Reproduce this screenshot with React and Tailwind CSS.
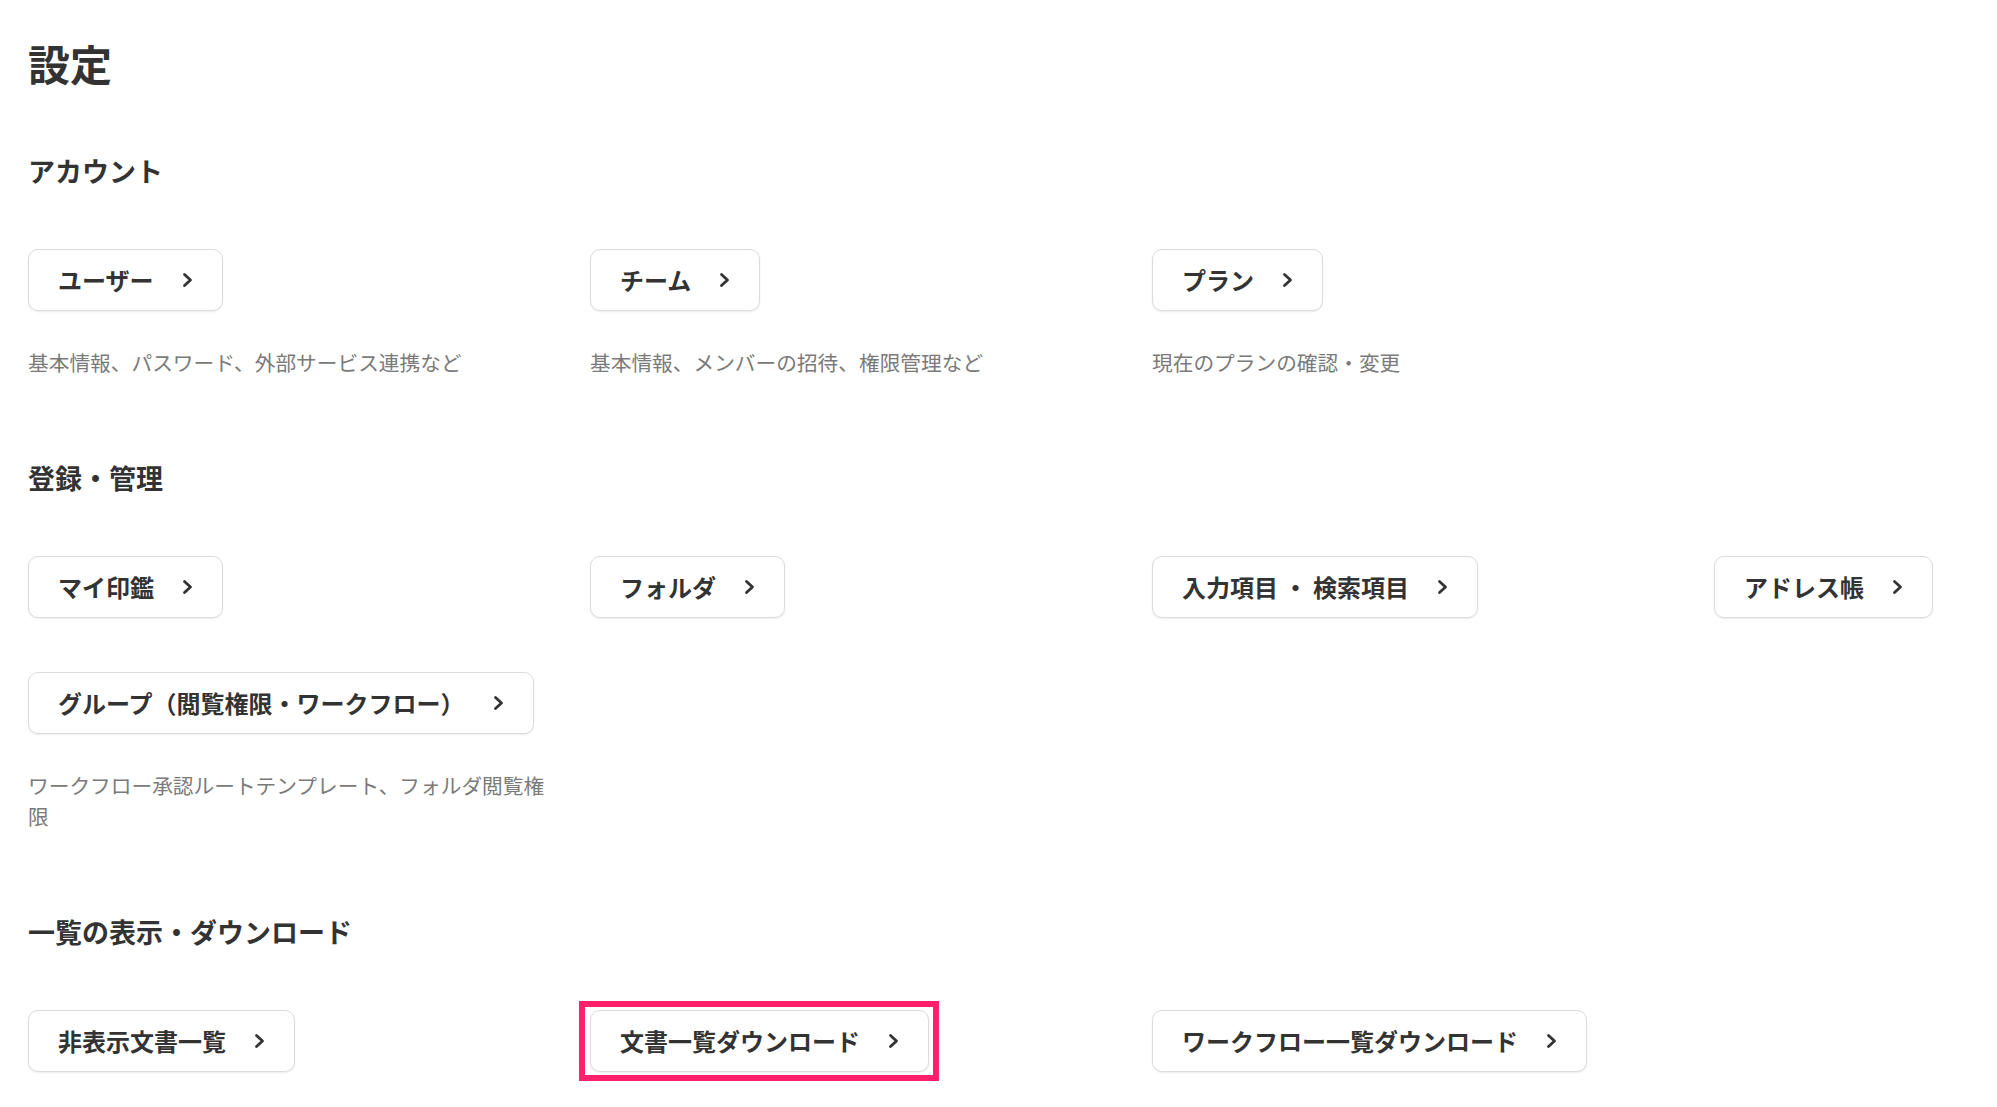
import React from "react";

const sections = [
  {
    title: "アカウント",
    items: [
      { label: "ユーザー", desc: "基本情報、パスワード、外部サービス連携など" },
      { label: "チーム", desc: "基本情報、メンバーの招待、権限管理など" },
      { label: "プラン", desc: "現在のプランの確認・変更" },
    ],
  },
  {
    title: "登録・管理",
    items: [
      { label: "マイ印鑑" },
      { label: "フォルダ" },
      { label: "入力項目 ・ 検索項目" },
      { label: "アドレス帳" },
      {
        label: "グループ（閲覧権限・ワークフロー）",
        desc: "ワークフロー承認ルートテンプレート、フォルダ閲覧権限",
      },
    ],
  },
  {
    title: "一覧の表示・ダウンロード",
    items: [
      { label: "非表示文書一覧" },
      { label: "文書一覧ダウンロード", marked: true },
      { label: "ワークフロー一覧ダウンロード" },
    ],
  },
];

function Chevron() {
  return (
    <svg width="11" height="16" viewBox="0 0 11 16" fill="none">
      <path
        d="M2.5 2.5 L8.5 8 L2.5 13.5"
        stroke="#333333"
        strokeWidth="2.8"
        strokeLinecap="round"
        strokeLinejoin="round"
      />
    </svg>
  );
}

function SettingButton({ label, marked }) {
  return (
    <div className="relative">
      <button className="h-[62px] px-[29px] flex items-center gap-[28px] bg-white border border-[#dcdcdc] rounded-[10px] shadow-[0_1px_2px_rgba(0,0,0,0.08)] text-[24px] font-bold text-[#333333] whitespace-pre">
        <span>{label}</span>
        <Chevron />
      </button>
      {/* annotation frame */}
      {marked && (
        <div className="absolute -left-[11px] -right-[10px] -top-[9px] -bottom-[9px] border-[6px] border-[#ff1f6b] pointer-events-none" />
      )}
    </div>
  );
}

export default function App() {
  return (
    <div
      className="min-h-screen bg-white px-[28px] pt-[33px] text-[#333333]"
      style={{ fontFamily: '"Noto Sans CJK JP", "Noto Sans", sans-serif' }}
    >
      <h1 className="text-[42px] leading-[60px] font-bold">設定</h1>

      <div className="flex flex-col gap-[80px] mt-[58px]">
        {sections.map((section) => (
          <section key={section.title}>
            <h2 className="text-[27px] leading-[40px] font-bold">{section.title}</h2>
            <div className="mt-[58px] grid grid-cols-[530px_530px_530px_1fr] gap-x-[32px] gap-y-[54px]">
              {section.items.map((item) => (
                <div key={item.label} className="flex flex-col items-start">
                  <SettingButton label={item.label} marked={item.marked} />
                  {item.desc && (
                    <p className="mt-[36px] text-[20.7px] leading-[31px] text-[#7a7a7a] w-full">
                      {item.desc}
                    </p>
                  )}
                </div>
              ))}
            </div>
          </section>
        ))}
      </div>
    </div>
  );
}
